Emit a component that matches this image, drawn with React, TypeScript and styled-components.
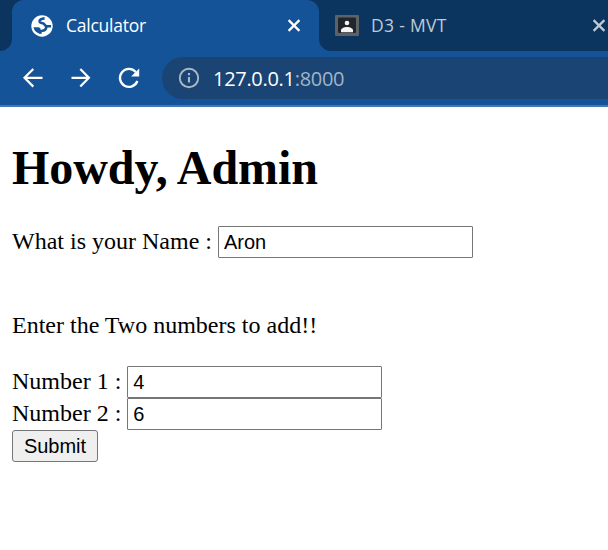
import React from 'react';
import styled, { createGlobalStyle } from 'styled-components';

const GlobalStyle = createGlobalStyle`
  body {
    margin: 0;
    background: #fff;
    overflow: hidden;
  }
`;

const Browser = styled.div`
  width: 100%;
  height: 550px;
  overflow: hidden;
  background: #fff;
`;

const TabStrip = styled.div`
  display: flex;
  height: 51px;
  background: #155399;
`;

const StripEdge = styled.div`
  width: 12px;
  flex: none;
  background: #0b355f;
  border-radius: 0 0 12px 0;
`;

const StripBack = styled.div<{ $grow?: boolean }>`
  display: flex;
  flex: ${(p) => (p.$grow ? '1' : 'none')};
  background: #0b355f;
  border-radius: ${(p) => (p.$grow ? '0 0 0 12px' : '0')};
`;

const ActiveTab = styled.div`
  box-sizing: border-box;
  display: flex;
  align-items: center;
  width: 307px;
  height: 51px;
  padding: 0 17px 0 19px;
  background: #155399;
  border-radius: 12px 12px 0 0;
`;

const IdleTab = styled.div`
  box-sizing: border-box;
  display: flex;
  align-items: center;
  flex: none;
  width: 288px;
  padding-left: 16px;
`;

const TabTitle = styled.span<{ $idle?: boolean }>`
  flex: 1;
  margin-left: 12px;
  padding-bottom: 2px;
  font: 17.5px/24px 'Open Sans', sans-serif;
  letter-spacing: ${(p) => (p.$idle ? '0.3px' : '-0.25px')};
  color: ${(p) => (p.$idle ? '#bfcad6' : '#fff')};
  white-space: nowrap;
`;

const Icon = styled.svg`
  display: block;
  flex: none;
`;

const Toolbar = styled.div`
  box-sizing: border-box;
  display: flex;
  align-items: center;
  height: 56px;
  padding-left: 21px;
  gap: 24px;
  background: #155399;
  border-bottom: 2px solid #4478b2;
`;

const AddressBar = styled.div`
  display: flex;
  align-items: center;
  flex: 1;
  height: 42px;
  margin-left: -3px;
  padding-left: 16px;
  gap: 13px;
  background: #194473;
  border-radius: 21px 0 0 21px;
`;

const Address = styled.span`
  padding-top: 1px;
  font: 20px/28px 'Open Sans', sans-serif;
  letter-spacing: -0.3px;
  color: #fff;
`;

const Port = styled.span`
  color: #a3b4c7;
`;

const Page = styled.main`
  padding: 0 12px;
  font: 24px/28px 'Liberation Serif', serif;
  color: #000;
`;

const Heading = styled.h1`
  margin: 0;
  padding-top: 33px;
  font-size: 48px;
  line-height: 55px;
  font-weight: bold;
  letter-spacing: -0.08px;
`;

const Row = styled.div<{ $top?: number }>`
  display: flex;
  align-items: center;
  height: 32px;
  gap: 6px;
  margin-top: ${(p) => p.$top ?? 0}px;
`;

const Label = styled.label`
  padding-bottom: 2px;
`;

const Prompt = styled.p`
  margin: 53px 0 27px;
`;

const TextField = styled.input`
  box-sizing: border-box;
  width: 255px;
  height: 32px;
  margin: 0;
  padding: 1px 5px;
  border: 1px solid #767676;
  border-radius: 1px;
  background: #fff;
  color: #000;
  font: 20px 'Liberation Sans', sans-serif;
  outline: none;
`;

const SubmitButton = styled.button`
  box-sizing: border-box;
  display: block;
  width: 86px;
  height: 32px;
  padding: 0;
  border: 1px solid #767676;
  border-radius: 3px;
  background: #efefef;
  color: #000;
  font: 20px 'Liberation Sans', sans-serif;
`;

const Globe = () => (
  <Icon width="23" height="24" viewBox="0 0 23 24">
    <circle cx="11" cy="12" r="10.7" fill="#fff" />
    <g fill="none" stroke="#155399">
      <path
        d="M13.600 4.400C10.400 4.600 8.300 5.900 8.600 7.600c.3 1.500 1.900 1.500 3.300 1.700 2 .3 1.400 2.700 3.600 2.900h4.600"
        strokeWidth="2.600"
      />
      <path d="M15.300 12.400c0 3-1.700 4.200-4.300 4.300-1.300 0-1.500.8-1.700 3" strokeWidth="2.600" />
    </g>
    <path d="M2.500 13.300h4.700c1.500 0 2.500 1 2.500 2.500v4.100c-3.900-.7-6.700-3.200-7.200-6.600z" fill="#155399" />
  </Icon>
);

const Close = ({ color }: { color: string }) => (
  <Icon width="16" height="16" viewBox="0 0 16 16">
    <path d="M2.6 2.1l10.8 10.8M13.4 2.1L2.6 12.9" stroke={color} strokeWidth="2.2" />
  </Icon>
);

const Classroom = () => (
  <Icon width="24" height="22" viewBox="0 0 24 22">
    <rect width="24" height="21" rx="1" fill="#5d6268" />
    <rect x="3" y="2.5" width="18" height="15.5" rx="1" fill="#20262c" />
    <circle cx="12" cy="8" r="2.3" fill="#f5f5f5" />
    <path d="M6 17.2v-2c0-2 3-3.3 6-3.3s6 1.3 6 3.3v2z" fill="#f5f5f5" />
  </Icon>
);

const Arrow = ({ forward }: { forward?: boolean }) => (
  <Icon width="24" height="24" viewBox="0 0 24 24">
    <path
      d={forward ? 'M2.5 11.8h17M11.3 3l8.600 8.800-8.600 8.800' : 'M21.5 11.8h-18M12.3 3l-8.800 8.800 8.800 8.800'}
      fill="none"
      stroke="#fff"
      strokeWidth="2.2"
    />
  </Icon>
);

const Reload = () => (
  <Icon width="24" height="24" viewBox="0 0 24 24">
    <path d="M20.4 15a9 9 0 1 1-1.7-9.1" fill="none" stroke="#fff" strokeWidth="2.3" />
    <path d="M22.2 2.5v8.1h-8.1z" fill="#fff" />
  </Icon>
);

const Info = () => (
  <Icon width="22" height="22" viewBox="0 0 22 22">
    <circle cx="11" cy="11" r="9.2" fill="none" stroke="#adb8c4" strokeWidth="1.9" />
    <path d="M11 10v5.6M11 6v2.2" stroke="#adb8c4" strokeWidth="2.1" />
  </Icon>
);

export default function App() {
  return (
    <Browser>
      <GlobalStyle />
      <TabStrip>
        <StripEdge />
        <StripBack>
          <ActiveTab>
            <Globe />
            <TabTitle>Calculator</TabTitle>
            <Close color="#fff" />
          </ActiveTab>
        </StripBack>
        <StripBack $grow>
          <IdleTab>
            <Classroom />
            <TabTitle $idle>D3 - MVT</TabTitle>
            <Close color="#bfcad6" />
          </IdleTab>
        </StripBack>
      </TabStrip>
      <Toolbar>
        <Arrow />
        <Arrow forward />
        <Reload />
        <AddressBar>
          <Info />
          <Address>
            127.0.0.1<Port>:8000</Port>
          </Address>
        </AddressBar>
      </Toolbar>
      <Page>
        <Heading>Howdy, Admin</Heading>
        <Row $top={31}>
          <Label htmlFor="name">What is your Name :</Label>
          <TextField id="name" defaultValue="Aron" />
        </Row>
        <Prompt>Enter the Two numbers to add!!</Prompt>
        <Row>
          <Label htmlFor="first">Number 1 :</Label>
          <TextField id="first" defaultValue="4" />
        </Row>
        <Row>
          <Label htmlFor="second">Number 2 :</Label>
          <TextField id="second" defaultValue="6" />
        </Row>
        <SubmitButton>Submit</SubmitButton>
      </Page>
    </Browser>
  );
}
